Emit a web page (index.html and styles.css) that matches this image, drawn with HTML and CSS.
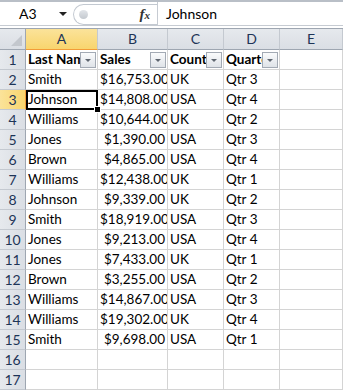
FILE: index.html
```html
<!DOCTYPE html>
<html>
<head>
    <meta charset="UTF-8">
    <title>Sales sheet</title>
    <link rel="stylesheet" href="styles.css">
</head>
<body>
    <div class="formula-bar">
        <div class="name-box">
            <span class="cell-ref">A3</span>
            <span class="name-arrow"></span>
        </div>
        <div class="fx-area">
            <span class="grip"></span>
            <span class="fx">f<span class="fx-x">x</span></span>
        </div>
        <div class="formula-input">Johnson</div>
    </div>
    <div class="gap"></div>

    <div class="sheet">
        <div class="corner"><span class="corner-tri"></span></div>
        <div class="col-head sel">A</div>
        <div class="col-head">B</div>
        <div class="col-head">C</div>
        <div class="col-head">D</div>
        <div class="col-head">E</div>

        <div class="row-head">1</div>
        <div class="cell head-cell">Last Name<span class="filter"></span></div>
        <div class="cell head-cell">Sales<span class="filter"></span></div>
        <div class="cell head-cell">Country<span class="filter"></span></div>
        <div class="cell head-cell">Quarter<span class="filter"></span></div>
        <div class="cell"></div>

        <div class="row-head">2</div>
        <div class="cell">Smith</div><div class="cell num">$16,753.00</div><div class="cell">UK</div><div class="cell">Qtr 3</div><div class="cell"></div>

        <div class="row-head sel">3</div>
        <div class="cell active">Johnson<span class="fill-handle"></span></div><div class="cell num">$14,808.00</div><div class="cell">USA</div><div class="cell">Qtr 4</div><div class="cell"></div>

        <div class="row-head">4</div>
        <div class="cell">Williams</div><div class="cell num">$10,644.00</div><div class="cell">UK</div><div class="cell">Qtr 2</div><div class="cell"></div>

        <div class="row-head">5</div>
        <div class="cell">Jones</div><div class="cell num">$1,390.00</div><div class="cell">USA</div><div class="cell">Qtr 3</div><div class="cell"></div>

        <div class="row-head">6</div>
        <div class="cell">Brown</div><div class="cell num">$4,865.00</div><div class="cell">USA</div><div class="cell">Qtr 4</div><div class="cell"></div>

        <div class="row-head">7</div>
        <div class="cell">Williams</div><div class="cell num">$12,438.00</div><div class="cell">UK</div><div class="cell">Qtr 1</div><div class="cell"></div>

        <div class="row-head">8</div>
        <div class="cell">Johnson</div><div class="cell num">$9,339.00</div><div class="cell">UK</div><div class="cell">Qtr 2</div><div class="cell"></div>

        <div class="row-head">9</div>
        <div class="cell">Smith</div><div class="cell num">$18,919.00</div><div class="cell">USA</div><div class="cell">Qtr 3</div><div class="cell"></div>

        <div class="row-head">10</div>
        <div class="cell">Jones</div><div class="cell num">$9,213.00</div><div class="cell">USA</div><div class="cell">Qtr 4</div><div class="cell"></div>

        <div class="row-head">11</div>
        <div class="cell">Jones</div><div class="cell num">$7,433.00</div><div class="cell">UK</div><div class="cell">Qtr 1</div><div class="cell"></div>

        <div class="row-head">12</div>
        <div class="cell">Brown</div><div class="cell num">$3,255.00</div><div class="cell">USA</div><div class="cell">Qtr 2</div><div class="cell"></div>

        <div class="row-head">13</div>
        <div class="cell">Williams</div><div class="cell num">$14,867.00</div><div class="cell">USA</div><div class="cell">Qtr 3</div><div class="cell"></div>

        <div class="row-head">14</div>
        <div class="cell">Williams</div><div class="cell num">$19,302.00</div><div class="cell">UK</div><div class="cell">Qtr 4</div><div class="cell"></div>

        <div class="row-head">15</div>
        <div class="cell">Smith</div><div class="cell num">$9,698.00</div><div class="cell">USA</div><div class="cell">Qtr 1</div><div class="cell"></div>

        <div class="row-head">16</div>
        <div class="cell"></div><div class="cell"></div><div class="cell"></div><div class="cell"></div><div class="cell"></div>

        <div class="row-head">17</div>
        <div class="cell"></div><div class="cell"></div><div class="cell"></div><div class="cell"></div><div class="cell"></div>
    </div>
</body>
</html>
```

FILE: styles.css
```css
body {
    margin: 0;
    width: 343px;
    height: 390px;
    overflow: hidden;
    background: white;
    font-family: Lato, "Liberation Sans", sans-serif;
    color: #000;
}
.formula-bar {
    display: flex;
    height: 23px;
    border-top: 2px solid #b9bfc7;
    border-bottom: 1px solid #c6cbd2;
    background: white;
}
.name-box {
    width: 73px;
    display: flex;
    align-items: center;
    position: relative;
}
.cell-ref {
    padding-left: 19px;
    font-size: 14px;
}
.name-arrow {
    position: absolute;
    left: 59px;
    top: 10px;
    border-left: 4px solid transparent;
    border-right: 4px solid transparent;
    border-top: 4px solid #222;
}
.fx-area {
    width: 84px;
    margin-top: 2px;
    height: 21px;
    border: 1px solid #c3c9d1;
    border-right: none;
    border-radius: 11px 0 0 11px;
    display: flex;
    align-items: center;
    justify-content: space-between;
    padding-left: 5px;
    padding-right: 7px;
    box-sizing: border-box;
}
.grip {
    width: 9px;
    height: 9px;
    border-radius: 50%;
    background: linear-gradient(#e2e5e9, #c4c9cf);
}
.fx {
    font-family: "Liberation Serif", serif;
    font-style: italic;
    font-weight: bold;
    font-size: 15px;
    color: #333;
}
.fx-x {
    font-size: 11px;
}
.formula-input {
    flex: 1;
    border-left: 1px solid #c6cbd2;
    padding-left: 8px;
    font-size: 14px;
    line-height: 23px;
}
.gap {
    height: 2px;
}
.sheet {
    display: grid;
    grid-template-columns: 26px 72px 70px 56px 56px 63px;
    grid-template-rows: 21px;
    grid-auto-rows: 20px;
    border-top: 1px solid #9ea6b1;
}
.corner {
    position: relative;
    background: linear-gradient(#e6e9ed, #dadee4);
    border-right: 1px solid #9ea6b1;
    border-bottom: 1px solid #9ea6b1;
}
.corner-tri {
    position: absolute;
    right: 3px;
    bottom: 3px;
    border-left: 11px solid transparent;
    border-bottom: 11px solid #c3c7cd;
}
.col-head {
    background: linear-gradient(#e6e9ed, #dadee4);
    border-right: 1px solid #c4c9d0;
    border-bottom: 1px solid #9ea6b1;
    text-align: center;
    font-size: 14px;
    line-height: 20px;
    color: #1d3457;
}
.row-head {
    background: linear-gradient(90deg, #e6e9ed, #dadee4);
    border-right: 1px solid #9ea6b1;
    border-bottom: 1px solid #c4c9d0;
    text-align: center;
    font-size: 14px;
    line-height: 19px;
    color: #1d3457;
}
.col-head.sel {
    background: linear-gradient(#fbe39a, #f8d56e);
    border-bottom-color: #f29c38;
}
.row-head.sel {
    background: linear-gradient(90deg, #fbe39a, #f8d56e);
    border-right-color: #f29c38;
}
.cell {
    position: relative;
    border-right: 1px solid #d4d4d4;
    border-bottom: 1px solid #d4d4d4;
    padding: 0 2px;
    font-size: 13.5px;
    line-height: 19px;
    white-space: nowrap;
    overflow: hidden;
}
.cell.num {
    text-align: right;
}
.head-cell {
    font-weight: bold;
}
.filter {
    position: absolute;
    right: 1px;
    top: 2px;
    width: 14px;
    height: 14px;
    border: 1px solid #a3aab4;
    background: linear-gradient(#fafbfc, #dfe3e8);
}
.filter::after {
    content: "";
    position: absolute;
    left: 4px;
    top: 6px;
    border-left: 3px solid transparent;
    border-right: 3px solid transparent;
    border-top: 3px solid #5f6670;
}
.cell.active {
    overflow: visible;
    z-index: 1;
}
.cell.active::before {
    content: "";
    position: absolute;
    left: 0;
    top: 0;
    width: 72px;
    height: 20px;
    border: 2px solid #000;
    box-sizing: border-box;
}
.fill-handle {
    position: absolute;
    right: -3px;
    bottom: -3px;
    width: 5px;
    height: 5px;
    background: #000;
    outline: 1px solid white;
}
```
